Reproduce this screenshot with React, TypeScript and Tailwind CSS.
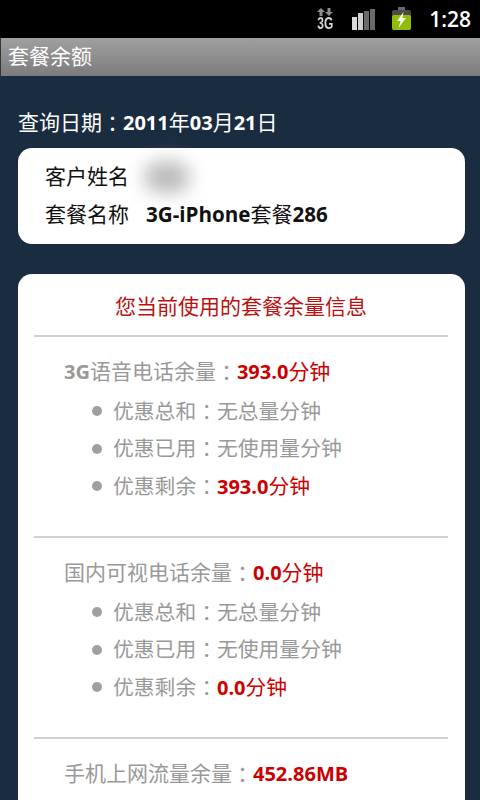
const font = { fontFamily: '"Open Sans", "Noto Sans CJK SC", sans-serif' };

// the fullwidth colon sits centred in its cell in the reference
function Colon() {
  return <span className="[font-family:'Noto_Sans_CJK_TC',sans-serif]">：</span>;
}

function Num({ children }: { children: React.ReactNode }) {
  return <span className="text-[20px] font-bold">{children}</span>;
}

function StatusBar() {
  return (
    <div className="flex h-[38px] items-center justify-end bg-black pr-[9px]">
      <div className="mr-[19px] flex h-[24px] w-[16px] flex-col">
        <svg width="16" height="10" viewBox="0 0 16 10">
          <path d="M4 1 L8 5 H5.5 V9 H2.5 V5 H0 Z" fill="#8c8c8c" />
          <path d="M12 9 L8 5 H10.5 V1 H13.5 V5 H16 Z" fill="#8c8c8c" />
        </svg>
        <span className="mt-[1px] scale-y-[1.3] text-center text-[12px] leading-[12px] font-bold text-[#d4d4d4] [font-family:'Liberation_Sans',sans-serif]">
          3G
        </span>
      </div>
      <svg width="23" height="22" viewBox="0 0 23 22" className="mr-[17px]">
        <rect x="0" y="9" width="5" height="13" fill="#dcdcdc" />
        <rect x="6" y="5" width="5" height="17" fill="#d0d0d0" />
        <rect x="12" y="3" width="5" height="19" fill="#6a6a6a" />
        <rect x="18" y="1" width="5" height="21" fill="#6a6a6a" />
      </svg>
      <svg width="19" height="24" viewBox="0 0 19 24" className="mr-[18px]">
        <rect x="6" y="0" width="7" height="3" fill="#6a6a6a" />
        <rect x="0" y="3" width="19" height="20" rx="2" fill="#4a4a4a" />
        <rect x="0" y="8" width="19" height="15" rx="2" fill="#8ebb0c" />
        <path d="M11.5 5 L5 14 H8.5 L6.5 21 L14 11 H10.5 Z" fill="#f4f7e6" />
      </svg>
      <span className="text-[21px] font-semibold leading-none text-white">1:28</span>
    </div>
  );
}

function Bullet({ label, value, num }: { label: string; value: string; num?: string }) {
  return (
    <div className="flex h-[37.5px] items-center pl-[58px] text-[20.8px] text-[#999999]">
      <span className="h-[10px] w-[10px] rounded-full bg-[#a0a0a0]" />
      <span className="ml-[11px]">{label}</span>
      <Colon />
      {num ? (
        <span className="text-[#cc0000]">
          <Num>{num}</Num>
          {value}
        </span>
      ) : (
        <span>{value}</span>
      )}
    </div>
  );
}

function UsageGroup({ title, lead, num, unit, rows }: {
  title: string;
  lead?: string;
  num: string;
  unit?: string;
  rows?: { label: string; value: string; num?: string }[];
}) {
  return (
    <div className="border-t-2 border-[#d0d0d0] pt-[16px] pb-[31px]">
      <div className="flex h-[37px] items-center pl-[30px] text-[21px] text-[#999999]">
        {lead && <Num>{lead}</Num>}
        <span>{title}</span>
        <Colon />
        <span className="text-[#cc0000]">
          <Num>{num}</Num>
          {unit}
        </span>
      </div>
      {rows && (
        <div className="mt-[2.5px]">
          {rows.map((r) => (
            <Bullet key={r.label} label={r.label} value={r.value} num={r.num} />
          ))}
        </div>
      )}
    </div>
  );
}

export default function App() {
  return (
    <div style={font} className="h-[800px] w-[480px] overflow-hidden bg-[#1a2c3f]">
      <StatusBar />
      <div className="flex h-[38px] items-center border-l border-[#333333] bg-gradient-to-b from-[#a0a0a0] to-[#7c7c7c] pl-[7px] text-[21px] text-white">
        套餐余额
      </div>
      <div className="pl-[18px] pr-[15px] pt-[30px]">
        <div className="flex h-[34px] items-center text-[21px] text-white">
          查询日期
          <Colon />
          <Num>2011</Num>年<Num>03</Num>月<Num>21</Num>日
        </div>
        <div className="mt-[8px] h-[96px] rounded-[14px] bg-white pl-[27px] pt-[10px] text-[21px] text-[#111111]">
          <div className="flex h-[37px] items-center">
            客户姓名
            <span className="ml-[15px] h-[32px] w-[46px] rounded-full bg-[#bcbcbc] blur-[9px]" />
          </div>
          <div className="mt-[1px] flex h-[37px] items-center">
            套餐名称
            <span className="ml-[17px]">
              <span className="text-[20.6px] font-bold">3G-iPhone</span>套餐<span className="text-[20.6px] font-bold">286</span>
            </span>
          </div>
        </div>
        <div className="mt-[30px] rounded-[14px] bg-white pl-[16px] pr-[17px]">
          <div className="flex h-[61px] items-center justify-center pt-[5px] text-[21px] text-[#bb1111]">
            您当前使用的套餐余量信息
          </div>
          <UsageGroup
            lead="3G"
            title="语音电话余量"
            num="393.0"
            unit="分钟"
            rows={[
              { label: '优惠总和', value: '无总量分钟' },
              { label: '优惠已用', value: '无使用量分钟' },
              { label: '优惠剩余', value: '分钟', num: '393.0' },
            ]}
          />
          <UsageGroup
            title="国内可视电话余量"
            num="0.0"
            unit="分钟"
            rows={[
              { label: '优惠总和', value: '无总量分钟' },
              { label: '优惠已用', value: '无使用量分钟' },
              { label: '优惠剩余', value: '分钟', num: '0.0' },
            ]}
          />
          <UsageGroup title="手机上网流量余量" num="452.86MB" />
        </div>
      </div>
    </div>
  );
}
